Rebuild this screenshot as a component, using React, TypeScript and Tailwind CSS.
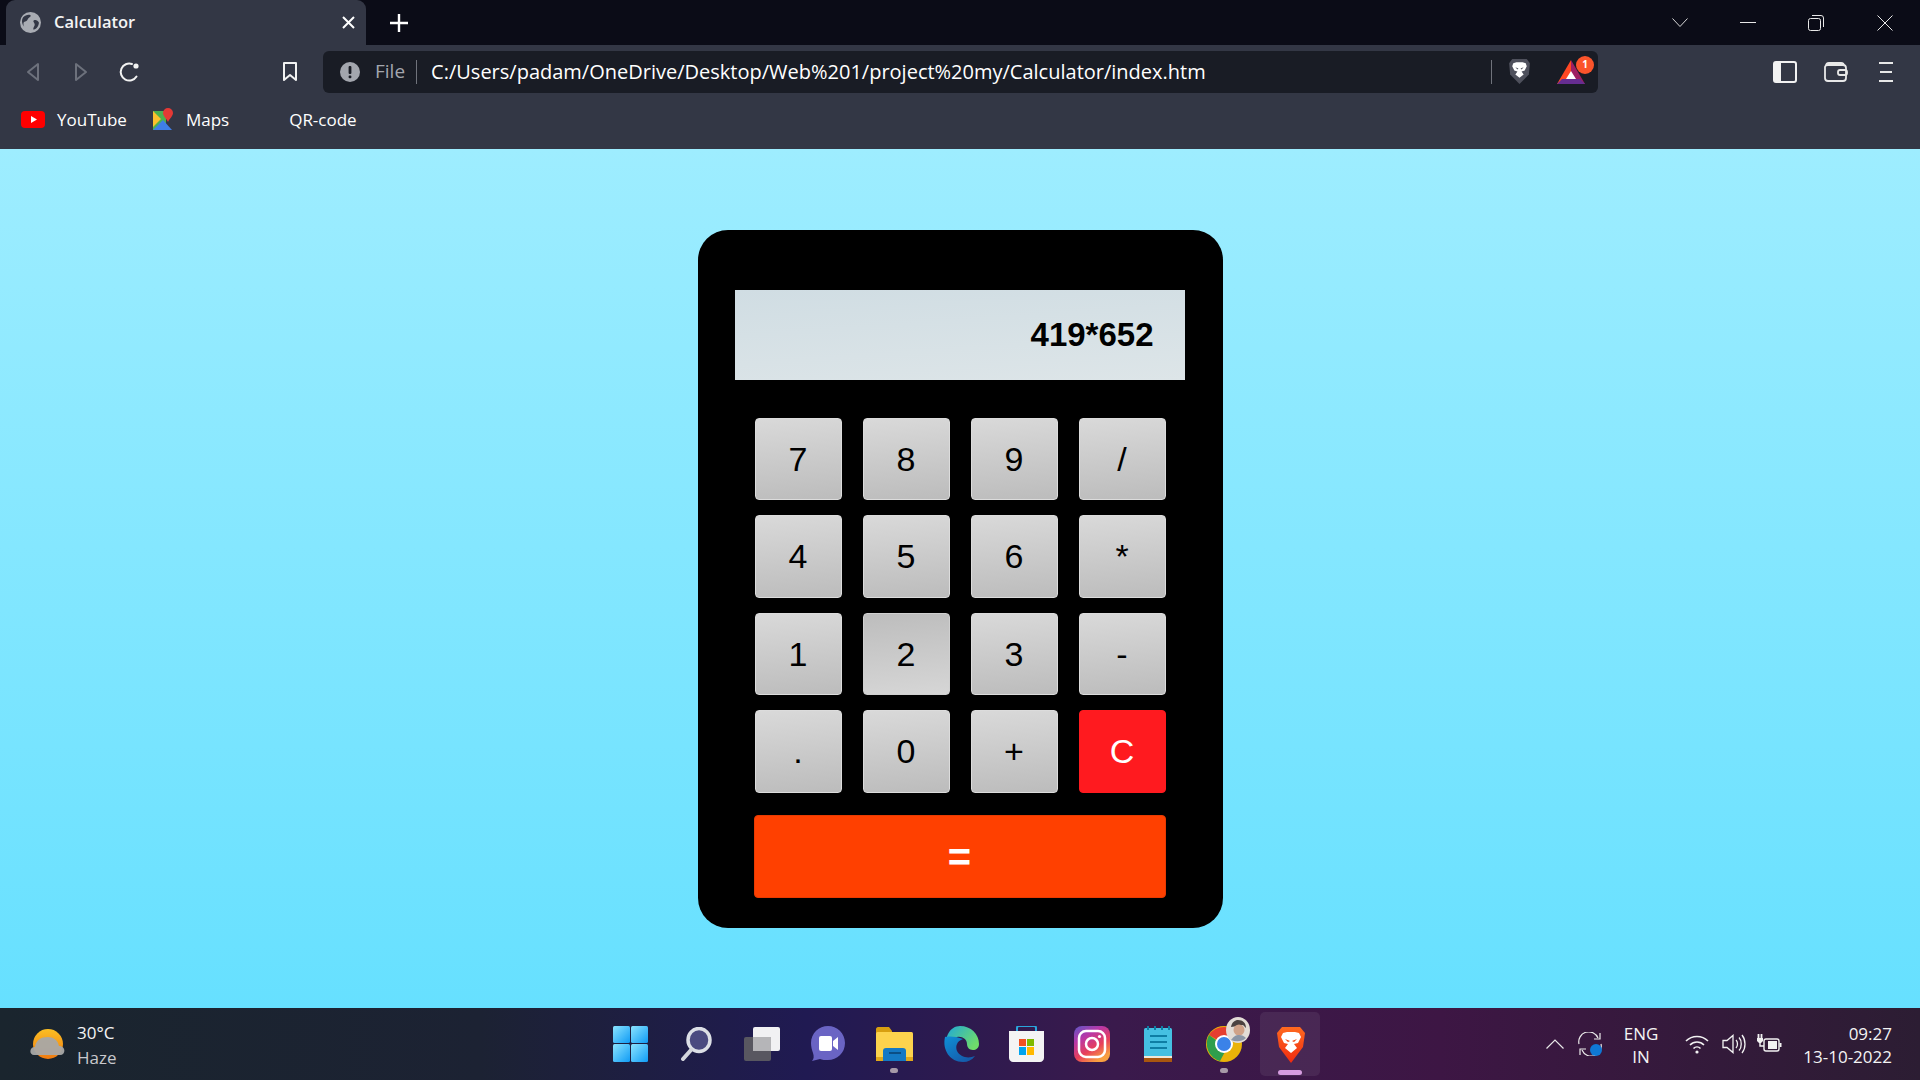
const uiFont = "font-['Open_Sans','Noto_Sans',sans-serif]";

type Key = { label: string; kind?: "pressed" | "clear" };

const keys: Key[] = [
  { label: "7" }, { label: "8" }, { label: "9" }, { label: "/" },
  { label: "4" }, { label: "5" }, { label: "6" }, { label: "*" },
  { label: "1" }, { label: "2", kind: "pressed" }, { label: "3" }, { label: "-" },
  { label: "." }, { label: "0" }, { label: "+" }, { label: "C", kind: "clear" },
];

function KeyButton({ label, kind }: Key) {
  const tone =
    kind === "clear"
      ? "bg-[#ff1a1f] border-[#ff1a1f] text-white"
      : kind === "pressed"
        ? "bg-[linear-gradient(175deg,#bdbdbd,#d6d6d6)] border-[#d0d0d0] text-black"
        : "bg-[linear-gradient(175deg,#d9d9d9,#bcbcbc)] border-[#dcdcdc] text-black";
  return (
    <button
      type="button"
      className={`flex items-center justify-center rounded-[4px] border text-[34px] font-['Liberation_Sans',sans-serif] ${tone}`}
    >
      {label}
    </button>
  );
}

function Globe() {
  return (
    <svg width="21" height="21" viewBox="0 0 20 20">
      <circle cx="10" cy="10" r="10" fill="#a9acb3" />
      <path d="M3 5c2-2 5-3 7-2 1 1-1 2-2 3s-1 3-3 3-2 3-1 5C2 12 1 8 3 5zM13 8c2-1 4 0 5 2 0 3-2 6-5 7-1-2 1-3 1-5s-2-3-1-4z" fill="#333745" />
    </svg>
  );
}

function Lion({ fill, face }: { fill: string; face: string }) {
  return (
    <svg width="23" height="27" viewBox="0 0 22 26">
      <path d="M4 1h14l3 4-1 11-9 9-9-9L1 5z" fill={fill} />
      <path d="M5 5l3-1h6l3 1 1 3-2 4-3 1 2 3-4 3-4-3 2-3-3-1-2-4z" fill={face} />
      <path d="M7 9l3 1-1 1zM15 9l-3 1 1 1z" fill={fill} />
    </svg>
  );
}

function Toolbar() {
  return (
    <div className="flex h-[53px] items-center">
      <svg className="ml-[25px]" width="16" height="20" viewBox="0 0 16 20" fill="none" stroke="#6d717c" strokeWidth="2">
        <path d="M13 2v16L3 10z" strokeLinejoin="round" />
      </svg>
      <svg className="ml-[32px]" width="16" height="20" viewBox="0 0 16 20" fill="none" stroke="#6d717c" strokeWidth="2">
        <path d="M3 2v16l10-8z" strokeLinejoin="round" />
      </svg>
      <svg className="ml-[30px]" width="22" height="22" viewBox="0 0 22 22" fill="none" stroke="#f2f2f2" strokeWidth="2">
        <path d="M17.5 15.5A8.5 8.5 0 1 1 13 3" strokeLinecap="round" />
        <circle cx="17" cy="5" r="2.6" fill="#f2f2f2" stroke="none" />
      </svg>
      <svg className="ml-[141px]" width="16" height="21" viewBox="0 0 16 21" fill="none" stroke="#f2f2f2" strokeWidth="2">
        <path d="M2 2h12v17l-6-5-6 5z" strokeLinejoin="round" />
      </svg>
      <div className="ml-[25px] flex h-[42px] w-[1275px] items-center rounded-[6px] bg-[#191c25]">
        <svg className="ml-[17px]" width="20" height="20" viewBox="0 0 20 20">
          <circle cx="10" cy="10" r="10" fill="#a3a6ae" />
          <rect x="8.6" y="4" width="2.8" height="8" rx="1" fill="#191c25" />
          <rect x="8.6" y="13.4" width="2.8" height="2.8" rx="1" fill="#191c25" />
        </svg>
        <span className="ml-[15px] text-[19px] leading-none text-[#a3a6ae]">File</span>
        <span className="ml-[11px] h-[24px] w-[1px] bg-[#70737c]" />
        <span className="ml-[14px] w-[1060px] text-[20px] leading-none whitespace-nowrap text-white">
          C:/Users/padam/OneDrive/Desktop/Web%201/project%20my/Calculator/index.htm
        </span>
        <span className="h-[24px] w-[1px] bg-[#70737c]" />
        <span className="ml-[16px] flex">
          <Lion fill="#4e505c" face="#ffffff" />
        </span>
        <span className="relative ml-[26px] flex">
          <svg width="28" height="24" viewBox="0 0 28 24">
            <path d="M14 0L0 24h14z" fill="#ff4724" />
            <path d="M14 0l14 24H14z" fill="#9e1f63" />
            <path d="M0 24l5-5h18l5 5z" fill="#662d91" />
            <path d="M14 11l5 8H9z" fill="#ffffff" />
          </svg>
          <span className="absolute top-[-4px] left-[19px] flex h-[18px] w-[18px] items-center justify-center rounded-full bg-[#fb542b] text-[10px] font-bold text-white">
            1
          </span>
        </span>
      </div>
      <svg className="ml-[175px]" width="24" height="22" viewBox="0 0 24 22" fill="none">
        <rect x="1" y="1" width="22" height="20" rx="2" stroke="#f2f2f2" strokeWidth="2" />
        <rect x="1" y="1" width="7" height="20" fill="#f2f2f2" />
      </svg>
      <svg className="ml-[27px]" width="24" height="22" viewBox="0 0 24 22" fill="none" stroke="#e8e8e8" strokeWidth="1.8">
        <path d="M2 5c0-2 1-3 3-3h12c2 0 3 1 3 3" />
        <path d="M1 6c0-1 1-2 3-2h15c2 0 3 1 3 3v10c0 2-1 3-3 3H4c-2 0-3-1-3-3z" />
        <rect x="14" y="9" width="9" height="5" rx="2" />
      </svg>
      <svg className="ml-[31px]" width="14" height="20" viewBox="0 0 14 20" fill="#e8e8e8">
        <rect x="0" y="0" width="14" height="2" />
        <rect x="1" y="9" width="12" height="2" />
        <rect x="0" y="18" width="14" height="2" />
      </svg>
    </div>
  );
}

function Bookmarks() {
  return (
    <div className="flex h-[51px] items-center pb-[9px] text-[17px] leading-none text-white">
      <svg className="ml-[21px]" width="24" height="17" viewBox="0 0 24 17">
        <rect width="24" height="17" rx="4" fill="#ff0000" />
        <path d="M10 5l6 3.5-6 3.5z" fill="#ffffff" />
      </svg>
      <span className="ml-[12px]">YouTube</span>
      <svg className="ml-[26px]" width="21" height="22" viewBox="0 0 21 22">
        <path d="M0 3h13v19H0z" fill="#4caf50" />
        <path d="M0 22l10-10 9 10z" fill="#3f7ee8" />
        <path d="M0 3l8 8-8 8z" fill="#fbc02d" />
        <path d="M15 0a5 5 0 0 1 5 5c0 3-3 5-5 9-2-4-5-6-5-9a5 5 0 0 1 5-5z" fill="#e53935" />
      </svg>
      <span className="ml-[12px]">Maps</span>
      <span className="ml-[60px]">QR-code</span>
    </div>
  );
}

function BrowserChrome() {
  return (
    <div className={`shrink-0 ${uiFont}`}>
      <div className="flex h-[45px] items-end bg-[#0b0c17]">
        <div className="ml-[6px] flex h-[45px] w-[360px] items-center rounded-t-[9px] bg-[#333745]">
          <span className="ml-[14px] flex"><Globe /></span>
          <span className="ml-[13px] text-[16.5px] font-semibold text-[#f4f4f4]">Calculator</span>
          <svg className="mr-[11px] ml-auto" width="13" height="13" viewBox="0 0 13 13" stroke="#ffffff" strokeWidth="2">
            <path d="M1 1l11 11M12 1L1 12" />
          </svg>
        </div>
        <svg className="mb-[13px] ml-[24px]" width="18" height="18" viewBox="0 0 18 18" stroke="#ffffff" strokeWidth="2.4">
          <path d="M9 0v18M0 9h18" />
        </svg>
        <div className="ml-auto flex h-[45px] items-center pr-[27px]">
          <svg width="16" height="9" viewBox="0 0 16 9" fill="none" stroke="#d8d8d8">
            <path d="M.5.5L8 8.5 15.5.5" />
          </svg>
          <span className="ml-[52px] h-[1.5px] w-[16px] bg-[#e8e8e8]" />
          <svg className="ml-[52px]" width="16" height="16" viewBox="0 0 16 16" fill="none" stroke="#e8e8e8">
            <rect x=".5" y="3.5" width="12" height="12" rx="2" />
            <path d="M4 .5h9a2.5 2.5 0 0 1 2.5 2.5v9" />
          </svg>
          <svg className="ml-[53px]" width="16" height="16" viewBox="0 0 16 16" stroke="#e8e8e8">
            <path d="M.5.5l15 15M15.5.5l-15 15" />
          </svg>
        </div>
      </div>
      <div className="bg-[#333745]">
        <Toolbar />
        <Bookmarks />
      </div>
    </div>
  );
}

function Calculator() {
  return (
    <div className="flex h-[698px] w-[525px] flex-col rounded-[30px] bg-black pt-[60px] font-['Liberation_Sans',sans-serif]">
      <div className="mx-[37px] flex h-[90px] w-[450px] items-center justify-end bg-[linear-gradient(176deg,#d0dde3,#dde5e8)] pr-[31px] text-[33px] font-bold text-black">
        419*652
      </div>
      <div className="mt-[38px] ml-[57px] grid grid-cols-[repeat(4,87px)] grid-rows-[82px_83px_82px_83px] gap-x-[21px] gap-y-[15px]">
        {keys.map((k) => (
          <KeyButton key={k.label} {...k} />
        ))}
      </div>
      <button
        type="button"
        className="mt-[22px] ml-[56px] flex h-[83px] w-[412px] items-center justify-center rounded-[4px] border border-[#e83a00] bg-[#ff4000] text-[40px] font-bold text-white"
      >
        =
      </button>
    </div>
  );
}

function TaskIcon({ children, dot, active }: { children: React.ReactNode; dot?: boolean; active?: boolean }) {
  return (
    <div className={`relative flex h-[64px] w-[60px] items-center justify-center rounded-[5px] ${active ? "bg-[#ffffff12]" : ""}`}>
      {children}
      {dot && <span className="absolute bottom-[3px] h-[5px] w-[8px] rounded-full bg-[#a79aa8]" />}
      {active && <span className="absolute bottom-[1px] h-[5px] w-[24px] rounded-full bg-[#d69ce0]" />}
    </div>
  );
}

function TaskIcons() {
  return (
    <div className="flex items-center gap-x-[6px]">
      <TaskIcon>
        <svg width="35" height="36" viewBox="0 0 35 36">
          <defs>
            <linearGradient id="win" x1="0" y1="0" x2="1" y2="1">
              <stop offset="0" stopColor="#8be4ff" />
              <stop offset="1" stopColor="#0f9bf5" />
            </linearGradient>
          </defs>
          <rect width="17" height="17" rx="1.5" fill="url(#win)" />
          <rect x="18" width="17" height="17" rx="1.5" fill="url(#win)" />
          <rect y="18" width="17" height="18" rx="1.5" fill="url(#win)" />
          <rect x="18" y="18" width="17" height="18" rx="1.5" fill="url(#win)" />
        </svg>
      </TaskIcon>
      <TaskIcon>
        <svg width="32" height="34" viewBox="0 0 32 34">
          <ellipse cx="19" cy="13" rx="11" ry="11.5" fill="#4a4a80" stroke="#dcdfe6" strokeWidth="3.5" />
          <path d="M11 23L3 32" stroke="#d4d6dc" strokeWidth="4" strokeLinecap="round" />
        </svg>
      </TaskIcon>
      <TaskIcon>
        <svg width="36" height="34" viewBox="0 0 36 34">
          <rect x="9" width="27" height="24" rx="2" fill="#f1f1f3" />
          <rect y="10" width="27" height="24" rx="2" fill="#5d5c62" fillOpacity="0.92" />
          <rect x="9" y="10" width="18" height="14" fill="#b5b5b8" />
        </svg>
      </TaskIcon>
      <TaskIcon>
        <svg width="34" height="36" viewBox="0 0 34 36">
          <path d="M17 0c9 0 17 7 17 17s-8 17-17 17c-3 0-6 0-8-1l-8 2c2-2 2-5 1-8-1-3-2-6-2-10C0 7 8 0 17 0z" fill="#6a64c4" />
          <rect x="8" y="10" width="13" height="15" rx="2" fill="#ffffff" />
          <path d="M22 15l5-4v13l-5-4z" fill="#ffffff" />
        </svg>
      </TaskIcon>
      <TaskIcon dot>
        <svg width="37" height="34" viewBox="0 0 37 34">
          <path d="M0 2c0-1 1-2 2-2h11l3 4v6H0z" fill="#d89f10" />
          <rect y="5" width="37" height="29" rx="1.5" fill="#fdd34d" />
          <rect y="30" width="37" height="4" fill="#e2a91a" />
          <path d="M7 24c0-2 1-3 3-3h17c2 0 3 1 3 3v10H7z" fill="#1479c4" />
          <rect x="13" y="25" width="12" height="2" fill="#0b4e85" />
        </svg>
      </TaskIcon>
      <TaskIcon>
        <svg width="37" height="36" viewBox="0 0 37 36">
          <defs>
            <linearGradient id="edgeTop" x1="0" y1="0" x2="1" y2="0.6">
              <stop offset="0" stopColor="#1fa8d8" />
              <stop offset="1" stopColor="#6fdc6a" />
            </linearGradient>
            <linearGradient id="edgeLow" x1="0" y1="0" x2="0.8" y2="1">
              <stop offset="0" stopColor="#0f8fd6" />
              <stop offset="1" stopColor="#1558a8" />
            </linearGradient>
          </defs>
          <path d="M18 0C29 0 37 8 37 18c0 4-3 6-6 6-4 0-6-3-6-6 0-5-5-8-10-7-6 1-9 5-10 11C2 11 8 0 18 0z" fill="url(#edgeTop)" />
          <path d="M3 11C0 24 8 36 21 36c5 0 9-2 12-6-7 3-15 1-18-5-2-5 0-10 6-12-7-3-15-3-18-2z" fill="url(#edgeLow)" />
        </svg>
      </TaskIcon>
      <TaskIcon>
        <svg width="35" height="36" viewBox="0 0 35 36">
          <path d="M8 6V2c0-1 1-2 2-2h15c1 0 2 1 2 2v4" fill="none" stroke="#2aa5dc" strokeWidth="2" />
          <path d="M0 5h35v27c0 2-2 4-4 4H4c-2 0-4-2-4-4z" fill="#f4f4f4" />
          <rect x="10" y="13" width="7" height="7" fill="#f25022" />
          <rect x="18" y="13" width="7" height="7" fill="#7fba00" />
          <rect x="10" y="21" width="7" height="8" fill="#00a4ef" />
          <rect x="18" y="21" width="7" height="8" fill="#ffb900" />
        </svg>
      </TaskIcon>
      <TaskIcon>
        <svg width="36" height="36" viewBox="0 0 36 36" fill="none">
          <defs>
            <linearGradient id="insta" x1="0" y1="0" x2="0.6" y2="1">
              <stop offset="0" stopColor="#5c58c8" />
              <stop offset="0.35" stopColor="#b838a8" />
              <stop offset="0.7" stopColor="#e8405a" />
              <stop offset="1" stopColor="#f8a040" />
            </linearGradient>
          </defs>
          <rect width="36" height="36" rx="8" fill="url(#insta)" />
          <rect x="5" y="5" width="26" height="26" rx="7" stroke="#ffffff" strokeWidth="2.5" />
          <circle cx="18" cy="18" r="6" stroke="#ffffff" strokeWidth="2.5" />
          <circle cx="25.5" cy="10.5" r="1.6" fill="#ffffff" />
        </svg>
      </TaskIcon>
      <TaskIcon>
        <svg width="28" height="36" viewBox="0 0 28 36">
          <rect y="2" width="28" height="31" rx="1.5" fill="#45c0e2" />
          <rect y="31" width="28" height="5" fill="#a8560f" />
          <rect y="30" width="28" height="2" fill="#f0e8d8" />
          <path d="M4 0v4M11 0v4M18 0v4M25 0v4" stroke="#0e7ea4" strokeWidth="2" />
          <path d="M6 10h17M6 16h17M6 22h17" stroke="#0e7ea4" strokeWidth="2" />
        </svg>
      </TaskIcon>
      <TaskIcon dot>
        <div className="relative">
          <svg width="36" height="36" viewBox="0 0 36 36">
            <circle cx="18" cy="18" r="18" fill="#eab308" />
            <path d="M18 18L3 9A18 18 0 0 1 33 9z" fill="#e53e30" />
            <path d="M3 9a18 18 0 0 0 11 26l7-13z" fill="#2e9e4c" />
            <circle cx="18" cy="18" r="9" fill="#ffffff" />
            <circle cx="18" cy="18" r="7" fill="#3b82e8" />
          </svg>
          <svg className="absolute top-[-9px] left-[20px]" width="24" height="26" viewBox="0 0 24 26">
            <ellipse cx="12" cy="13" rx="12" ry="13" fill="#e2dcd6" />
            <path d="M5 10c1-5 4-7 7-7 5 0 8 3 8 8l-3-3-5 1z" fill="#4b4240" />
            <circle cx="13" cy="13" r="5.5" fill="#d0a288" />
            <path d="M5 23c3-4 5-5 8-5s5 1 7 3c-4 4-10 4-15 2z" fill="#8c96a6" />
          </svg>
        </div>
      </TaskIcon>
      <TaskIcon active>
        <svg className="mt-[2px] ml-[1px]" width="30" height="36" viewBox="0 0 30 36">
          <defs>
            <linearGradient id="brave" x1="0" y1="0" x2="0" y2="1">
              <stop offset="0" stopColor="#ff6a1f" />
              <stop offset="1" stopColor="#f02a10" />
            </linearGradient>
          </defs>
          <path d="M6 0h18l5 6-2 14-12 16L3 20 1 6z" fill="url(#brave)" />
          <path d="M7 6l4-1h8l4 1 2 4-3 6-4 1 3 4-6 5-6-5 3-4-4-1-3-6z" fill="#ffffff" />
          <path d="M9 12l5 2-2 1zM21 12l-5 2 2 1z" fill="#f04a14" />
        </svg>
      </TaskIcon>
    </div>
  );
}

function Tray() {
  return (
    <div className="flex flex-1 items-center text-[#f4f4f4]">
      <svg className="ml-[226px]" width="18" height="10" viewBox="0 0 18 10" fill="none" stroke="#e8e8e8" strokeWidth="1.2">
        <path d="M.5 9.5L9 1l8.5 8.5" />
      </svg>
      <span className="relative ml-[14px] flex">
        <svg width="24" height="24" viewBox="0 0 24 24" fill="none" stroke="#ececec" strokeWidth="1.2">
          <path d="M1 12A10 10 0 0 1 20 6M23 12a10 10 0 0 1-19 6" />
          <path d="M22 1v6h-6M2 23v-6h6" />
        </svg>
        <span className="absolute top-[12px] left-[12px] h-[12px] w-[12px] rounded-full bg-[#0f78d4]" />
      </span>
      <div className="ml-[19px] flex w-[40px] flex-col items-center pt-[2px] text-[17px] leading-[23px]">
        <span>ENG</span>
        <span>IN</span>
      </div>
      <svg className="ml-[24px]" width="24" height="20" viewBox="0 0 24 20" fill="none" stroke="#f2f2f2" strokeWidth="1.6">
        <path d="M1 7c6-6 16-6 22 0M5 11c4-4 10-4 14 0M8.5 14.5c2-2 5-2 7 0" />
        <circle cx="12" cy="18" r="1.6" fill="#f2f2f2" stroke="none" />
      </svg>
      <svg className="ml-[13px]" width="24" height="22" viewBox="0 0 24 22" fill="none" stroke="#f2f2f2" strokeWidth="1.3">
        <path d="M1 7.5h4l6-5v17l-6-5H1z" />
        <path d="M14 7c2 2 2 6 0 8M17 4.5c3 3 3 10 0 13M20 2c4 5 4 13 0 18" />
      </svg>
      <svg className="ml-[11px]" width="25" height="20" viewBox="0 0 25 20" fill="none" stroke="#f2f2f2" strokeWidth="1.4">
        <rect x="7" y="5" width="15" height="12" rx="2" />
        <rect x="11" y="7" width="9" height="8" fill="#f2f2f2" stroke="none" />
        <rect x="22.5" y="9" width="2" height="4" fill="#f2f2f2" stroke="none" />
        <path d="M1.5 0v4M4.5 0v4" strokeWidth="1.8" />
        <path d="M0 4h6v3l-2 2H2L0 7z" fill="#f2f2f2" stroke="none" />
        <path d="M3 9v3h4" />
      </svg>
      <div className="ml-auto flex flex-col items-end pt-[2px] pr-[28px] text-[17px] leading-[23px]">
        <span>09:27</span>
        <span>13-10-2022</span>
      </div>
    </div>
  );
}

function Taskbar() {
  return (
    <div className={`flex h-[72px] shrink-0 items-center bg-[linear-gradient(90deg,#1a252e_0%,#1c2233_25%,#201a52_42%,#3a1a4c_58%,#3d1644_75%,#2c1d33_100%)] ${uiFont}`}>
      <div className="flex w-[600px] items-center">
        <svg className="mt-[2px] ml-[30px]" width="36" height="32" viewBox="0 0 36 32">
          <defs>
            <linearGradient id="sun" x1="0" y1="0" x2="0" y2="1">
              <stop offset="0" stopColor="#fbbf24" />
              <stop offset="1" stopColor="#f07a10" />
            </linearGradient>
          </defs>
          <circle cx="18" cy="15" r="15" fill="url(#sun)" />
          <path d="M4 26c-5 0-5-8 1-8 1-7 6-10 13-10 5 0 10 3 11 9 7 0 7 9 1 9z" fill="#a8a8a6" fillOpacity="0.95" />
        </svg>
        <div className="ml-[11px] flex flex-col pt-[2px] text-[17px] leading-[25px]">
          <span className="text-[#f4f4f4]">30°C</span>
          <span className="text-[#c8c8cc]">Haze</span>
        </div>
      </div>
      <TaskIcons />
      <Tray />
    </div>
  );
}

export default function App() {
  return (
    <div className="flex h-[1080px] w-[1920px] flex-col overflow-hidden">
      <BrowserChrome />
      <main className="flex flex-1 items-center justify-center bg-[linear-gradient(180deg,#9eedff,#66e0ff)] pt-[1px]">
        <Calculator />
      </main>
      <Taskbar />
    </div>
  );
}
